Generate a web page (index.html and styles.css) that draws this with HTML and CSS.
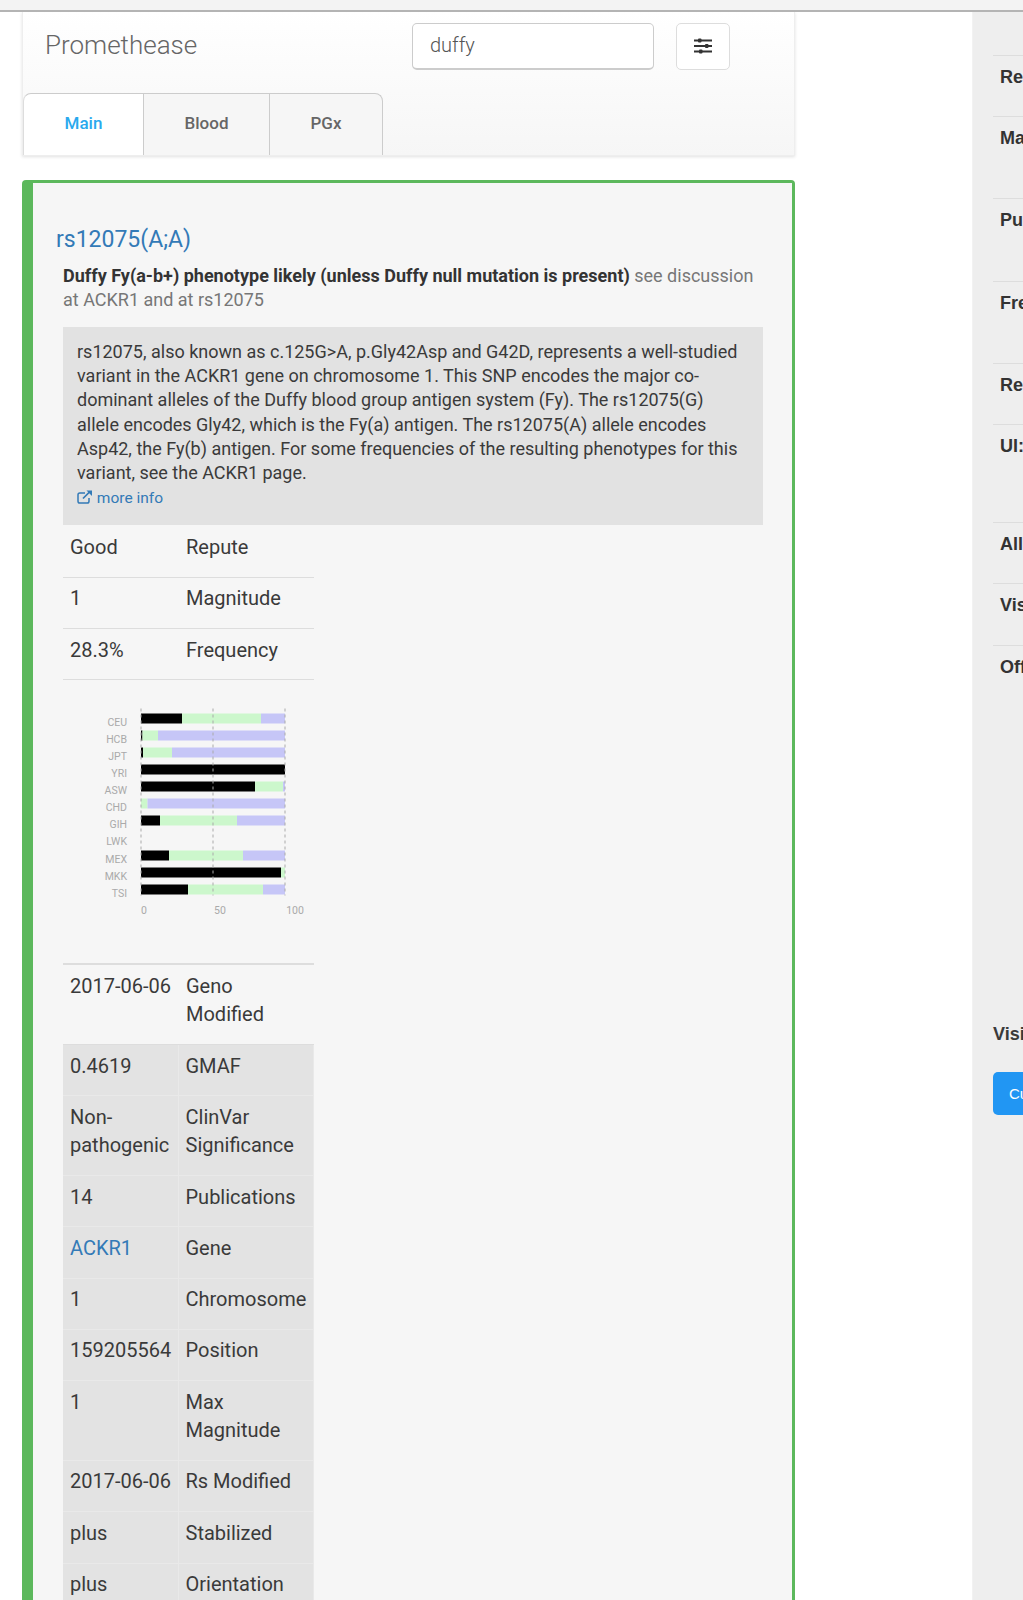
FILE: index.html
```html
<!DOCTYPE html>
<html lang="en">
<head>
<meta charset="utf-8">
<title>Promethease</title>
<link rel="stylesheet" href="styles.css">
</head>
<body>
<div class="page">
  <div class="topbar"></div>
  <div class="columns">
    <main class="main">
      <header class="panel">
        <div class="panel-top">
          <div class="brand">Promethease</div>
          <div class="search">duffy</div>
          <button class="filter-btn" type="button" aria-label="Filters">
            <svg width="18" height="16" viewBox="0 0 18 16"><path d="M0 2.500h18M0 8h18M0 13.500h18" stroke="#333" stroke-width="1.800"/><rect x="4" y="0.500" width="3.500" height="4" rx="1" fill="#333"/><rect x="11" y="6" width="3.500" height="4" rx="1" fill="#333"/><rect x="5" y="11.500" width="3.500" height="4" rx="1" fill="#333"/></svg>
          </button>
        </div>
        <nav class="tabs">
          <a class="tab tab-main is-active">Main</a>
          <a class="tab tab-blood">Blood</a>
          <a class="tab tab-pgx">PGx</a>
        </nav>
      </header>

      <article class="card">
        <h2 class="title">rs12075(A;A)</h2>
        <div class="content">
          <p class="summary"><b>Duffy Fy(a-b+) phenotype likely (unless Duffy null mutation is present)</b> see discussion at ACKR1 and at rs12075</p>
          <div class="desc">
            <p>rs12075, also known as c.125G&gt;A, p.Gly42Asp and G42D, represents a well-studied variant in the ACKR1 gene on chromosome 1. This SNP encodes the major co-dominant alleles of the Duffy blood group antigen system (Fy). The rs12075(G) allele encodes Gly42, which is the Fy(a) antigen. The rs12075(A) allele encodes Asp42, the Fy(b) antigen. For some frequencies of the resulting phenotypes for this variant, see the ACKR1 page.</p>
            <a class="more"><svg width="16" height="14" viewBox="0 0 16 14"><path d="M12 8v3.200a1.800 1.800 0 0 1-1.800 1.800H2.800A1.800 1.800 0 0 1 1 11.200V4.800A1.800 1.800 0 0 1 2.800 3H8" fill="none" stroke="#337ab7" stroke-width="1.500"/><path d="M6 8.500 13 1.500" stroke="#337ab7" stroke-width="1.700"/><path d="M9.500 0.500h5.500v5.500z" fill="#337ab7"/></svg> more info</a>
          </div>
          <table class="facts facts-first">
            <tr><td class="val">Good</td><td>Repute</td></tr>
            <tr><td class="val">1</td><td>Magnitude</td></tr>
            <tr><td class="val">28.3%</td><td>Frequency</td></tr>
          </table>
          <svg class="chart" width="251" height="283" viewBox="0 -1.500 251 283" role="img" aria-label="Population frequency chart">
            <g class="bars">
              <rect class="k" x="78" y="32" width="41" height="10"/><rect class="g" x="119" y="32" width="79" height="10"/><rect class="b" x="198" y="32" width="24" height="10"/>
              <rect class="k" x="78" y="49" width="1.500" height="10"/><rect class="g" x="79.500" y="49" width="15.500" height="10"/><rect class="b" x="95" y="49" width="127" height="10"/>
              <rect class="k" x="78" y="66" width="2" height="10"/><rect class="g" x="80" y="66" width="29" height="10"/><rect class="b" x="109" y="66" width="113" height="10"/>
              <rect class="k" x="78" y="83" width="144" height="10"/>
              <rect class="k" x="78" y="100" width="114" height="10"/><rect class="g" x="192" y="100" width="28" height="10"/><rect class="b" x="220" y="100" width="2" height="10"/>
              <rect class="g" x="78" y="117" width="6.500" height="10"/><rect class="b" x="84.500" y="117" width="137.500" height="10"/>
              <rect class="k" x="78" y="134" width="19" height="10"/><rect class="g" x="97" y="134" width="77" height="10"/><rect class="b" x="174" y="134" width="48" height="10"/>
              <rect class="k" x="78" y="169" width="28" height="10"/><rect class="g" x="106" y="169" width="74" height="10"/><rect class="b" x="180" y="169" width="42" height="10"/>
              <rect class="k" x="78" y="186" width="140" height="10"/><rect class="g" x="218" y="186" width="4" height="10"/>
              <rect class="k" x="78" y="203" width="47" height="10"/><rect class="g" x="125" y="203" width="75" height="10"/><rect class="b" x="200" y="203" width="22" height="10"/>
            </g>
            <path class="grid" d="M78 27V214M150 27V214M222 27V214"/>
            <g class="labels">
              <text x="64" y="44">CEU</text><text x="64" y="61">HCB</text><text x="64" y="78">JPT</text><text x="64" y="95">YRI</text>
              <text x="64" y="112">ASW</text><text x="64" y="129">CHD</text><text x="64" y="146">GIH</text><text x="64" y="163">LWK</text>
              <text x="64" y="181">MEX</text><text x="64" y="198">MKK</text><text x="64" y="215">TSI</text>
            </g>
            <g class="axis">
              <text x="81" y="232">0</text><text x="157" y="232">50</text><text x="232" y="232">100</text>
            </g>
          </svg>
          <table class="facts facts-top">
            <tr><td class="val">2017-06-06</td><td>Geno Modified</td></tr>
          </table>
          <table class="facts facts-grey">
            <tr><td class="val">0.4619</td><td>GMAF</td></tr>
            <tr><td class="val">Non-pathogenic</td><td>ClinVar Significance</td></tr>
            <tr><td class="val">14</td><td>Publications</td></tr>
            <tr><td class="val"><a>ACKR1</a></td><td>Gene</td></tr>
            <tr><td class="val">1</td><td>Chromosome</td></tr>
            <tr><td class="val">159205564</td><td>Position</td></tr>
            <tr><td class="val">1</td><td>Max Magnitude</td></tr>
            <tr><td class="val">2017-06-06</td><td>Rs Modified</td></tr>
            <tr><td class="val">plus</td><td>Stabilized</td></tr>
            <tr><td class="val">plus</td><td>Orientation</td></tr>
          </table>
        </div>
      </article>
    </main>
    <aside class="side">
      <div class="side-list">
        <div class="side-row r1">Report</div>
        <div class="side-row r2">Magnitude</div>
        <div class="side-row r2">Publications</div>
        <div class="side-row r2">Frequency</div>
        <div class="side-row r1">Repute</div>
        <div class="side-row r3">UI: compact</div>
        <div class="side-row r4">All</div>
        <div class="side-row r4">Visible</div>
        <div class="side-row r1">Off</div>
      </div>
      <div class="side-head">Visible</div>
      <a class="side-btn">Custom</a>
    </aside>
  </div>
</div>
</body>
</html>
```
FILE: styles.css
```css
* { box-sizing: border-box; }
html, body { margin: 0; padding: 0; background: #fff; }
body { font-family: Roboto, "Liberation Sans", sans-serif; color: #3a3a3a; }
.page { width: 1023px; height: 1600px; overflow: hidden; display: flex; flex-direction: column; }
.topbar { flex: none; height: 12px; background: #f3f3f3; border-bottom: 2px solid #b4b4b4; position: relative; z-index: 1; }
.columns { flex: 1; min-height: 0; display: grid; grid-template-columns: 972px 51px; }

.main { padding-left: 22px; width: 795px; min-width: 0; }
.panel { height: 144px; background: linear-gradient(#fff, #f6f6f6); border: 1px solid #eee; border-top: 0; box-shadow: 0 1px 3px rgba(0,0,0,.12); padding-top: 11px; display: flex; flex-direction: column; justify-content: space-between; }
.panel-top { display: flex; align-items: flex-start; padding-left: 22px; }
.brand { width: 367px; font-size: 26px; font-weight: 300; line-height: 44px; color: #666; }
.search { width: 242px; height: 47px; line-height: 43px; padding-left: 17px; background: #fff; border: 1px solid #ccc; border-bottom-width: 2px; border-radius: 5px; font-size: 20px; font-weight: 300; color: #555; }
.filter-btn { width: 54px; height: 47px; margin-left: 22px; padding: 0 0 2px; background: #fff; border: 1px solid #ddd; border-radius: 5px; display: flex; align-items: center; justify-content: center; }
.tabs { display: flex; }
.tab { height: 62px; line-height: 59px; text-align: center; font-size: 17px; font-weight: 500; color: #666; background: #f6f6f6; border: 1px solid #ccc; border-bottom: 0; border-left: 0; }
.tab-main { width: 121px; border-top-left-radius: 8px; border-left: 1px solid #ddd; }
.tab-blood { width: 126px; }
.tab-pgx { width: 113px; border-top-right-radius: 8px; }
.tab.is-active { background: #fff; color: #29a9ee; }

.card { margin-top: 24px; background: #f6f6f6; border: 3px solid #5cb85c; border-left-width: 11px; border-bottom: 0; border-radius: 4px 4px 0 0; padding: 41px 30px 0 23px; height: 1500px; }
.title { margin: 0; font-size: 23px; font-weight: 400; line-height: 32px; color: #337ab7; }
.content { margin-left: 7px; }
.summary { margin: 8px 0 0; font-size: 18px; line-height: 24px; color: #777; }
.summary b { color: #333; font-weight: 700; }
.desc { margin-top: 15px; padding: 13px 14px 16px; background: #e2e2e2; height: 198px; width: 700px; }
.desc p { margin: 0; font-size: 18px; line-height: 24.200px; }
.more { display: block; margin-top: 2px; font-size: 15.500px; line-height: 22px; color: #337ab7; }
.more svg { vertical-align: -1px; }
.facts { width: 251px; border-collapse: collapse; font-size: 20px; line-height: 28.400px; table-layout: fixed; }
.facts-first { margin-top: 1.500px; }
.facts td { padding: 6.500px 8px 15.400px 7px; border-bottom: 1.500px solid #ddd; vertical-align: top; }
.facts .val { width: 116px; padding-right: 4px; }
.facts a { color: #337ab7; }
.chart { display: block; }
.bars .k { fill: #000; }
.bars .g { fill: #ccf7cc; }
.bars .b { fill: #c6c6f7; }
.grid { fill: none; stroke: #aaa; stroke-width: 1; stroke-dasharray: 3 3; }
.labels text { font-size: 10.500px; fill: #aaa; text-anchor: end; }
.axis text { font-size: 10.500px; fill: #aaa; text-anchor: middle; }
.facts-top { border-top: 2px solid #ddd; }
.facts-grey td { background: #e3e3e3; border-bottom: 1.500px solid #e9e9e9; border-right: 1px solid #e9e9e9; }
.facts-grey .val { width: 115px; }

.side { background: #eee; border-left: 1px solid #f2f2f2; padding: 43px 0 0 20px; overflow: hidden; min-width: 0; }
.side-list { width: 200px; }
.side-row { font-family: "Liberation Sans", Arial, sans-serif; font-weight: 700; font-size: 18px; line-height: 24px; padding: 9px 0 0 7px; border-top: 1px solid #ddd; color: #333; white-space: nowrap; }
.r1 { height: 60.500px; }
.r2 { height: 82.600px; }
.r3 { height: 98px; }
.r4 { height: 61.500px; }
.side-head { margin-top: 317px; font-family: "Liberation Sans", Arial, sans-serif; font-weight: 700; font-size: 18px; line-height: 24px; white-space: nowrap; }
.side-btn { display: block; width: 120px; height: 43px; margin-top: 26px; background: #2196f3; color: #fff; border-radius: 5px; font-family: "Liberation Sans", Arial, sans-serif; font-size: 15px; line-height: 43px; padding-left: 16px; white-space: nowrap; }
```
